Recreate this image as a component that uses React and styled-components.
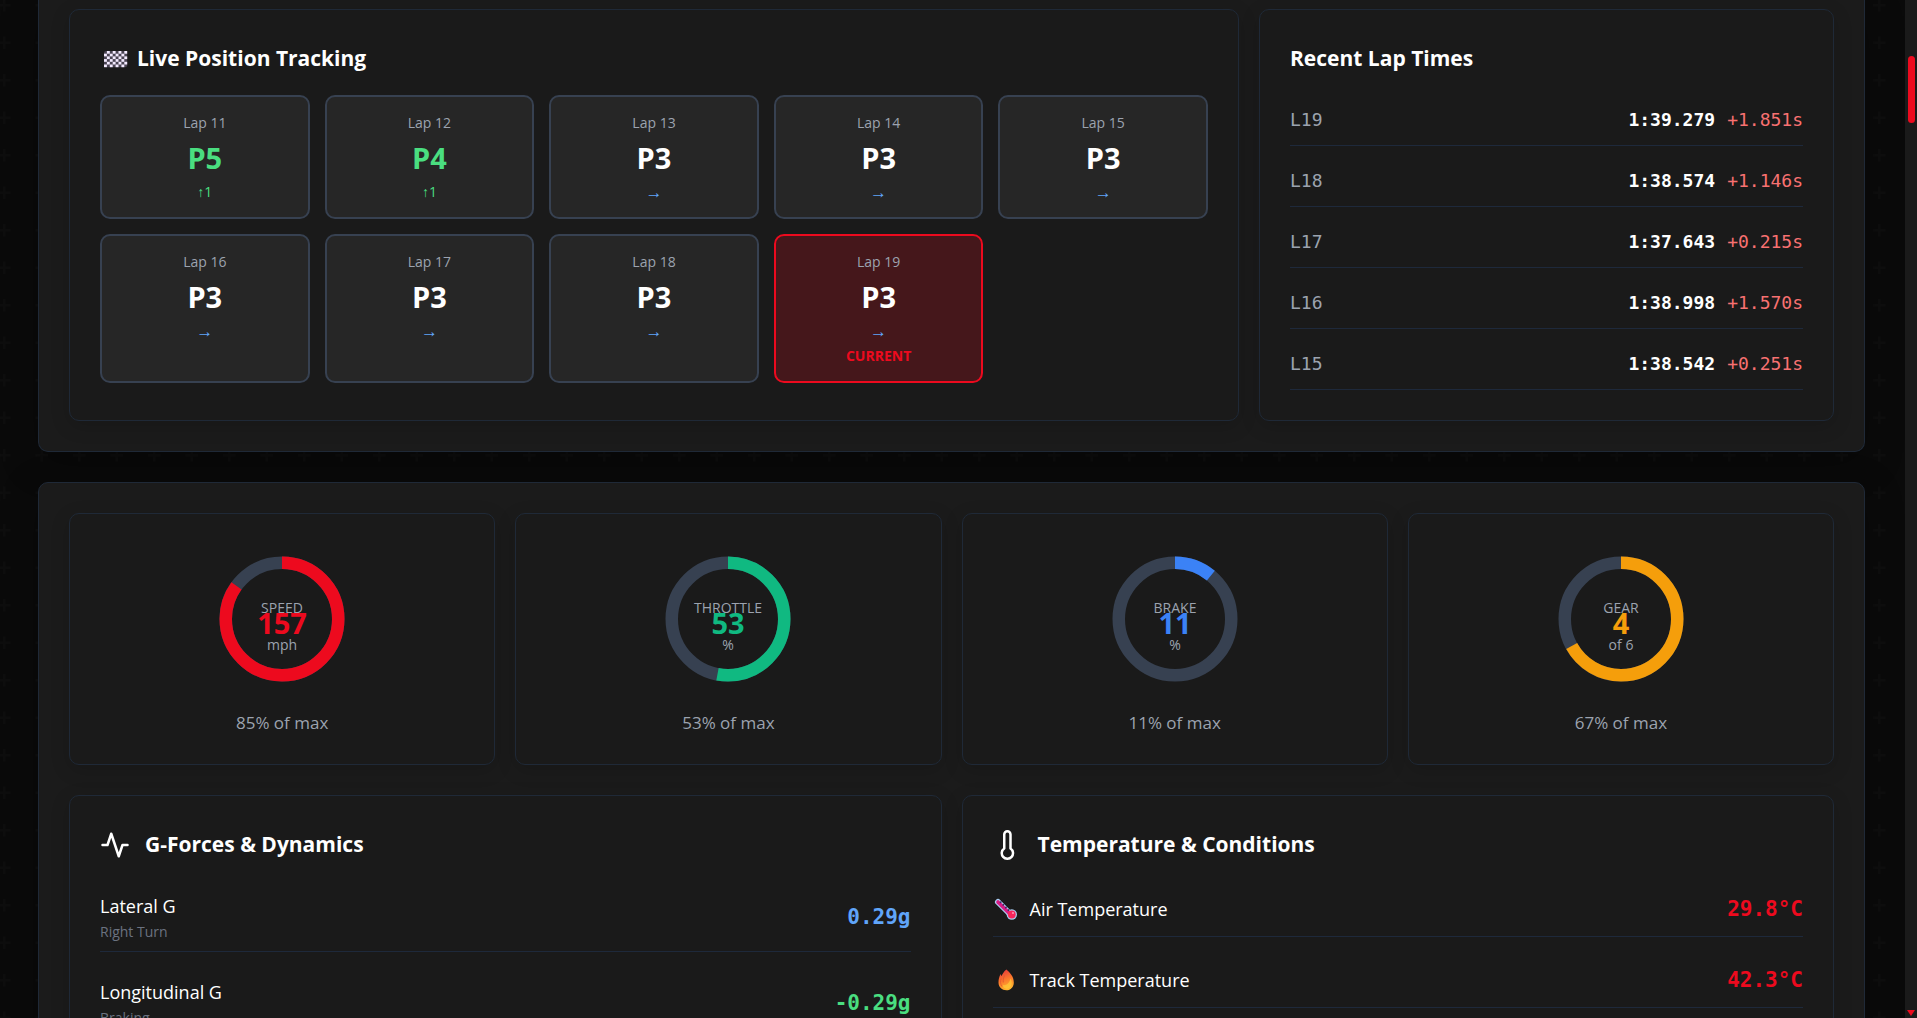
import React from 'react'
import styled, { createGlobalStyle } from 'styled-components'

const colors = {
  page: '#0a0a0a',
  card: '#1b1b1b',
  panel: '#1a1a1a',
  tile: '#262626',
  line: '#1f2937',
  rowLine: '#1e293b',
  lineStrong: '#374151',
  text: '#ffffff',
  muted: '#9ca3af',
  faint: '#6b7280',
  red: '#ed0a1e',
  redSoft: '#f87171',
  green: '#4ade80',
  blue: '#60a5fa',
}

const fonts = {
  sans: '"Open Sans", "Noto Sans", sans-serif',
  mono: '"DejaVu Sans Mono", "Liberation Mono", monospace',
}

const plus = (x, y) => `M${x - 1} ${y - 5}h2v4h4v2h-4v4h-2v-4h-4v-2h4z`
const plusPattern = encodeURIComponent(
  `<svg xmlns="http://www.w3.org/2000/svg" width="75" height="75" viewBox="0 0 60 60"><path fill="#fff" fill-opacity="0.015" d="${[
    plus(5, 5),
    plus(35, 5),
    plus(5, 35),
    plus(35, 35),
  ].join('')}"/></svg>`
)

const positions = [
  { lap: 11, position: 5, gained: 1 },
  { lap: 12, position: 4, gained: 1 },
  { lap: 13, position: 3, gained: 0 },
  { lap: 14, position: 3, gained: 0 },
  { lap: 15, position: 3, gained: 0 },
  { lap: 16, position: 3, gained: 0 },
  { lap: 17, position: 3, gained: 0 },
  { lap: 18, position: 3, gained: 0 },
  { lap: 19, position: 3, gained: 0, current: true },
]

const lapTimes = [
  { lap: 'L19', time: '1:39.279', delta: '+1.851s' },
  { lap: 'L18', time: '1:38.574', delta: '+1.146s' },
  { lap: 'L17', time: '1:37.643', delta: '+0.215s' },
  { lap: 'L16', time: '1:38.998', delta: '+1.570s' },
  { lap: 'L15', time: '1:38.542', delta: '+0.251s' },
]

const gauges = [
  { label: 'SPEED', value: 157, unit: 'mph', percent: 85, color: colors.red },
  { label: 'THROTTLE', value: 53, unit: '%', percent: 53, color: '#10b981' },
  { label: 'BRAKE', value: 11, unit: '%', percent: 11, color: '#3b82f6' },
  { label: 'GEAR', value: 4, unit: 'of 6', percent: 67, color: '#f59e0b' },
]

const forces = [
  { name: 'Lateral G', note: 'Right Turn', value: '0.29g', color: colors.blue },
  {
    name: 'Longitudinal G',
    note: 'Braking',
    value: '-0.29g',
    color: colors.green,
  },
]

const temperatures = [
  { name: 'Air Temperature', value: '29.8°C', Icon: ThermometerEmoji },
  { name: 'Track Temperature', value: '42.3°C', Icon: FireEmoji },
]

export default function App() {
  return (
    <>
      <GlobalStyle />
      <Page>
        <Main>
          <Card $continued>
            <Grid>
              <Panel $span={8}>
                <PanelTitle $gap={7}>
                  <FlagEmoji />
                  Live Position Tracking
                </PanelTitle>
                <Tiles>
                  {positions.map(item => (
                    <PositionTile key={item.lap} {...item} />
                  ))}
                </Tiles>
              </Panel>

              <Panel $span={4}>
                <PanelTitle>Recent Lap Times</PanelTitle>
                <LapTable>
                  <tbody>
                    {lapTimes.map(({ lap, time, delta }) => (
                      <tr key={lap}>
                        <LapName scope="row">{lap}</LapName>
                        <LapTime>
                          {time}
                          <Delta>{delta}</Delta>
                        </LapTime>
                      </tr>
                    ))}
                  </tbody>
                </LapTable>
              </Panel>
            </Grid>
          </Card>

          <Card>
            <Grid>
              {gauges.map(gauge => (
                <Panel key={gauge.label} $span={3}>
                  <Gauge {...gauge} />
                </Panel>
              ))}
            </Grid>

            <Grid>
              <Panel $span={6}>
                <PanelTitle $gap={15}>
                  <ActivityIcon />
                  G-Forces & Dynamics
                </PanelTitle>
                <Rows>
                  {forces.map(({ name, note, value, color }) => (
                    <Row key={name}>
                      <div>
                        <RowName>{name}</RowName>
                        <RowNote>{note}</RowNote>
                      </div>
                      <RowValue $color={color}>{value}</RowValue>
                    </Row>
                  ))}
                </Rows>
              </Panel>

              <Panel $span={6}>
                <PanelTitle $gap={15}>
                  <ThermometerIcon />
                  Temperature & Conditions
                </PanelTitle>
                <Rows>
                  {temperatures.map(({ name, value, Icon }) => (
                    <Row key={name}>
                      <RowLabel>
                        <Icon />
                        <RowName>{name}</RowName>
                      </RowLabel>
                      <RowValue $color={colors.red}>{value}</RowValue>
                    </Row>
                  ))}
                </Rows>
              </Panel>
            </Grid>
          </Card>
        </Main>

        <ScrollTrack>
          <ScrollThumb />
          <ScrollArrow viewBox="0 0 8 6">
            <path d="M0 0h8L4 6z" />
          </ScrollArrow>
        </ScrollTrack>
      </Page>
    </>
  )
}

function PositionTile({ lap, position, gained, current }) {
  return (
    <Tile $current={current}>
      <TileText>Lap {lap}</TileText>
      <TilePosition $gained={gained > 0}>P{position}</TilePosition>
      {gained > 0 ? (
        <TileText $color={colors.green}>↑{gained}</TileText>
      ) : (
        <TileText $color={colors.blue} $size={17}>
          →
        </TileText>
      )}
      {current && (
        <TileText $color={colors.red} $bold>
          CURRENT
        </TileText>
      )}
    </Tile>
  )
}

function Gauge({ label, value, unit, percent, color }) {
  return (
    <GaugeBox>
      <GaugeSvg viewBox="0 0 150 150">
        <g transform="rotate(-90 75 75)" fill="none" strokeWidth="12.5">
          <circle cx="75" cy="75" r="56.25" stroke={colors.lineStrong} />
          <circle
            cx="75"
            cy="75"
            r="56.25"
            stroke={color}
            pathLength="100"
            strokeDasharray={`${percent} 100`}
          />
        </g>
        <GaugeLabel x="75" y="69">
          {label}
        </GaugeLabel>
        <GaugeValue x="75" y="90" fill={color}>
          {value}
        </GaugeValue>
        <GaugeLabel x="75" y="106">
          {unit}
        </GaugeLabel>
      </GaugeSvg>
      <GaugeCaption>{percent}% of max</GaugeCaption>
    </GaugeBox>
  )
}

function FlagEmoji() {
  const squares = []
  for (let row = 0; row < 6; row++) {
    for (let col = 0; col < 8; col++) {
      if ((row + col) % 2) squares.push([col, row])
    }
  }

  return (
    <svg width="30" height="30" viewBox="0 0 30 30" aria-hidden="true">
      <rect x="4" y="7" width="23.2" height="16.2" rx="2" fill="#4a4453" />
      {squares.map(([col, row]) => (
        <rect
          key={`${col}-${row}`}
          x={4 + col * 2.9}
          y={7 + row * 2.7}
          width="2.9"
          height="2.7"
          fill="#f3eaff"
        />
      ))}
    </svg>
  )
}

function ThermometerEmoji() {
  return (
    <svg width="27" height="27" viewBox="0 0 27 27" aria-hidden="true">
      <path d="M5 6 17 18" stroke="#a9cdf2" strokeWidth="6" strokeLinecap="round" />
      <circle cx="18.8" cy="18.5" r="5.2" fill="#a9cdf2" />
      <path d="M5 6 17 18" stroke="#d81b83" strokeWidth="3.6" strokeLinecap="round" />
      <circle cx="18.8" cy="18.5" r="3.9" fill="#f8255c" />
      <path
        d="m8.4 5.6-1.4 1.4M11 8.2l-1.4 1.4M13.6 10.8l-1.4 1.4M16.2 13.4l-1.4 1.4"
        stroke="#3b2a63"
        strokeWidth="1.4"
      />
      <circle cx="20" cy="17" r="1.1" fill="#ff8fb0" />
    </svg>
  )
}

function FireEmoji() {
  return (
    <svg width="27" height="27" viewBox="0 0 27 27" aria-hidden="true">
      <defs>
        <linearGradient id="flame" x1="0.3" y1="0" x2="0.6" y2="1">
          <stop offset="0" stopColor="#e8383b" />
          <stop offset="0.5" stopColor="#fb7a2c" />
          <stop offset="1" stopColor="#ffb92e" />
        </linearGradient>
      </defs>
      <path
        d="M13.4 2.6c3.6 3.4 7.4 6.700 7.400 12.900 0 4.500-3 7.800-7.400 7.800S5.500 20.200 5.500 15.600c0-3.300.6-5.700 2.200-8.600.3 1 .5 1.500 1 2.100C9.200 7.600 10.800 4.500 13.400 2.600z"
        fill="url(#flame)"
      />
      <path
        d="M17.5 11.500c2.300 3.500 1.500 10-3.800 10.300-3 .1-4-2-3.600-3.700 3 .6 6.400-2 7.400-6.600z"
        fill="#ffd43a"
        opacity="0.6"
      />
      <path
        d="M8.200 11.500c-1 3-.8 5.500.6 8M11.500 8.500c-1.200 2.500-1.500 4.500-1.200 7"
        fill="none"
        stroke="#e2532f"
        strokeWidth="0.8"
      />
    </svg>
  )
}

function ActivityIcon() {
  return (
    <LineIcon viewBox="0 0 24 24" aria-hidden="true">
      <polyline points="22 12 18 12 15 21 9 3 6 12 2 12" />
    </LineIcon>
  )
}

function ThermometerIcon() {
  return (
    <LineIcon viewBox="0 0 24 24" aria-hidden="true">
      <path d="M14 14.76V3.5a2.5 2.5 0 0 0-5 0v11.26a4.5 4.5 0 1 0 5 0z" />
    </LineIcon>
  )
}

const GlobalStyle = createGlobalStyle`
  * {
    box-sizing: border-box;
  }

  body {
    margin: 0;
    background: ${colors.page};
    color: ${colors.text};
    font-family: ${fonts.sans};
  }
`

const Page = styled.div`
  display: flex;
  height: 100vh;
  overflow: hidden;
`

const Main = styled.main`
  flex: 1;
  min-width: 0;
  display: flex;
  flex-direction: column;
  gap: 30px;
  padding: 0 40px 0 38px;
  background: url('data:image/svg+xml,${plusPattern}') -2px -1px;
`

const Card = styled.section`
  flex-shrink: 0;
  display: flex;
  flex-direction: column;
  gap: 30px;
  padding: ${props => (props.$continued ? '9px 30px 30px' : '30px')};
  background: ${colors.card};
  border: 1px solid ${colors.line};
  border-top-width: ${props => (props.$continued ? '0px' : '1px')};
  border-radius: ${props => (props.$continued ? '0 0 10px 10px' : '10px')};
  box-shadow: 0 10px 38px rgba(0, 0, 0, 0.25);
`

const Grid = styled.div`
  display: grid;
  grid-template-columns: repeat(12, minmax(0, 1fr));
  gap: 20px;
`

const Panel = styled.article`
  grid-column: span ${props => props.$span};
  padding: 30px;
  background: ${colors.panel};
  border: 1px solid ${colors.line};
  border-radius: 10px;
  box-shadow: 0 5px 19px rgba(0, 0, 0, 0.15);
`

const PanelTitle = styled.h3`
  display: flex;
  align-items: center;
  gap: ${props => props.$gap || 0}px;
  margin: 0 0 18px;
  font-size: 21px;
  line-height: 37px;
  font-weight: 700;
`

const Tiles = styled.div`
  display: grid;
  grid-template-columns: repeat(5, minmax(0, 1fr));
  gap: 15px;
`

const Tile = styled.div`
  display: flex;
  flex-direction: column;
  align-items: center;
  gap: 5px;
  padding: 16px 15px 15px;
  background: ${props => (props.$current ? '#45171b' : colors.tile)};
  border: 2px solid
    ${props => (props.$current ? colors.red : colors.lineStrong)};
  border-radius: 10px;
`

const TileText = styled.span`
  font-size: ${props => props.$size || 14}px;
  line-height: 20px;
  font-weight: ${props => (props.$bold ? 700 : 400)};
  color: ${props => props.$color || colors.muted};
`

const TilePosition = styled.strong`
  font-size: 29px;
  line-height: 39px;
  font-weight: 700;
  color: ${props => (props.$gained ? colors.green : colors.text)};
`

const LapTable = styled.table`
  width: 100%;
  margin: -10px 0;
  border-collapse: separate;
  border-spacing: 0 10px;
  font-family: ${fonts.mono};
  font-size: 18px;
  line-height: 26px;

  th,
  td {
    padding: 12px 0;
    border-bottom: 1px solid ${colors.rowLine};
  }
`

const LapName = styled.th`
  text-align: left;
  font-weight: 400;
  color: ${colors.muted};
`

const LapTime = styled.td`
  text-align: right;
  font-weight: 700;
`

const Delta = styled.span`
  margin-left: 12px;
  font-weight: 400;
  color: ${colors.redSoft};
`

const GaugeBox = styled.div`
  display: flex;
  flex-direction: column;
  align-items: center;
  gap: 17px;
`

const GaugeSvg = styled.svg`
  width: 150px;
  height: 150px;
`

const GaugeLabel = styled.text`
  font-size: 14px;
  text-anchor: middle;
  fill: ${colors.muted};
`

const GaugeValue = styled.text`
  font-size: 29px;
  font-weight: 700;
  text-anchor: middle;
`

const GaugeCaption = styled.span`
  font-size: 17px;
  line-height: 23px;
  color: ${colors.muted};
`

const Rows = styled.div`
  display: flex;
  flex-direction: column;
  gap: 15px;
`

const Row = styled.div`
  display: flex;
  align-items: center;
  justify-content: space-between;
  padding: 11px 0 9px;
  border-bottom: 1px solid ${colors.rowLine};
`

const RowLabel = styled.div`
  display: flex;
  align-items: center;
  gap: 10px;
`

const RowName = styled.div`
  font-size: 18px;
  line-height: 29px;
`

const RowNote = styled.div`
  font-size: 14px;
  line-height: 21px;
  color: ${colors.faint};
`

const RowValue = styled.span`
  font-family: ${fonts.mono};
  font-size: 21px;
  line-height: 35px;
  font-weight: 700;
  color: ${props => props.$color};
`

const LineIcon = styled.svg`
  width: 30px;
  height: 30px;
  fill: none;
  stroke: currentColor;
  stroke-width: 2;
  stroke-linecap: round;
  stroke-linejoin: round;
`

const ScrollTrack = styled.div`
  display: flex;
  flex-direction: column;
  align-items: center;
  justify-content: space-between;
  width: 12px;
  padding: 56px 0 2px;
  background: ${colors.panel};
`

const ScrollThumb = styled.div`
  width: 7px;
  height: 67px;
  border-radius: 4px;
  background: ${colors.red};
`

const ScrollArrow = styled.svg`
  width: 8px;
  height: 6px;
  fill: ${colors.red};
`
